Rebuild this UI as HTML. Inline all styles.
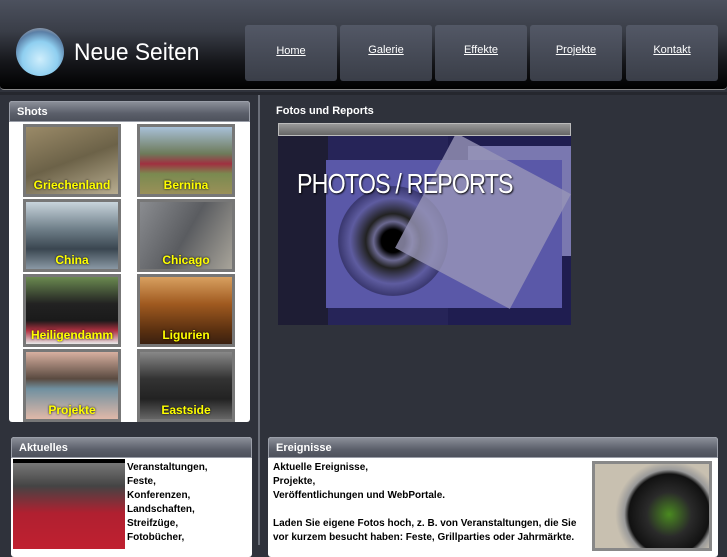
<!DOCTYPE html>
<html><head><meta charset="utf-8"><style>
*{margin:0;padding:0;box-sizing:border-box}
body{width:727px;height:545px;overflow:hidden;background:#2f323b;font-family:"Liberation Sans",sans-serif;position:relative}
.abs{position:absolute}
#hdr{left:0;top:0;width:727px;height:90px;background:linear-gradient(#4c515e 0%,#3a3e48 35%,#15161a 70%,#000 100%);border-bottom:1px solid #888;border-radius:0 0 4px 4px}
.btn{top:25px;width:92px;height:56px;background:linear-gradient(#535866,#3a3e48);border-radius:3px;color:#fff;font-size:11px;text-decoration:underline;text-align:center;line-height:52px}
.ph{height:21px;background:linear-gradient(#8a8e98,#5b5f6a 60%,#4d515c);border-radius:3px 3px 0 0;color:#fff;font-weight:bold;font-size:11px;padding-left:7px;line-height:20px;border:1px solid #9a9ea8}
.th{width:98px;height:73px;border:3px solid #777;}
.th span{position:absolute;left:0;right:0;bottom:2px;text-align:center;color:#ff0;font-weight:bold;font-size:12px;text-shadow:0 0 2px #000}
.txt{font-size:10px;font-weight:bold;color:#000;line-height:14px}
</style></head><body>
<div id="hdr" class="abs"></div>
<div class="abs" style="left:16px;top:28px;width:48px;height:48px;border-radius:50%;background:radial-gradient(circle at 50% 65%,#cfeefc 0%,#8fcff0 45%,#5b7fa6 70%,#8a96a8 80%,#3c4050 100%);"></div>
<div class="abs" style="left:74px;top:39px;color:#fff;font-size:24px;transform:scaleX(0.95);transform-origin:left">Neue Seiten</div>
<div class="abs btn" style="left:245px">Home</div>
<div class="abs btn" style="left:340px;line-height:50px">Galerie</div>
<div class="abs btn" style="left:435px;line-height:50px">Effekte</div>
<div class="abs btn" style="left:530px;line-height:50px">Projekte</div>
<div class="abs btn" style="left:626px;line-height:50px">Kontakt</div>
<div class="abs" style="left:258px;top:95px;width:2px;height:450px;background:#6a6e78"></div>
<div class="abs" style="left:0;top:92px;width:727px;height:3px;background:#25272e"></div>

<div class="abs" style="left:9px;top:101px;width:241px;height:321px;background:#fff;border-radius:3px"></div>
<div class="abs ph" style="left:9px;top:101px;width:241px">Shots</div>
<div class="abs th" style="left:23px;top:124px;background:linear-gradient(160deg,#9a8a68,#6c6248 50%,#b8ad90)"><span>Griechenland</span></div>
<div class="abs th" style="left:137px;top:124px;background:linear-gradient(#a8c0d8,#6d7a5a 40%,#a03040 55%,#7a8a50 70%,#9a9058)"><span>Bernina</span></div>
<div class="abs th" style="left:23px;top:199px;background:linear-gradient(#c8d4dc,#70808a 40%,#3a4650 70%,#8a98a4)"><span>China</span></div>
<div class="abs th" style="left:137px;top:199px;background:linear-gradient(120deg,#8a8c90,#5a5c60 50%,#a8a49a)"><span>Chicago</span></div>
<div class="abs th" style="left:23px;top:274px;background:linear-gradient(#6a8a50,#222 40%,#1a1a1a 65%,#b03040 80%,#e8e8e8)"><span>Heiligendamm</span></div>
<div class="abs th" style="left:137px;top:274px;background:linear-gradient(#d8a060,#a05a20 40%,#5a3010 80%,#3a2010)"><span>Ligurien</span></div>
<div class="abs th" style="left:23px;top:349px;background:linear-gradient(#d8b0a0,#5a4a40 40%,#7090a0 55%,#e0b8a8)"><span>Projekte</span></div>
<div class="abs th" style="left:137px;top:349px;background:linear-gradient(#888,#333 40%,#222 70%,#666)"><span>Eastside</span></div>

<div class="abs" style="left:276px;top:105px;color:#fff;font-weight:bold;font-size:11px">Fotos und Reports</div>
<div class="abs" style="left:278px;top:123px;width:293px;height:13px;background:linear-gradient(#999,#666);border:1px solid #bbb"></div>
<div class="abs" style="left:278px;top:136px;width:293px;height:189px;background:linear-gradient(90deg,#1e1d34 0,#1e1d34 50px,#262458 50px,#262458 170px,#1f1d50 170px);overflow:hidden">
 <div class="abs" style="left:190px;top:10px;width:103px;height:110px;background:#7a78b0"></div>
 <div class="abs" style="left:48px;top:24px;width:236px;height:148px;background:#5a58a8"></div>
 <div class="abs" style="left:60px;top:50px;width:110px;height:110px;border-radius:50%;background:radial-gradient(#000 15%,#6a6890 25%,#222 35%,#5e5ca0 55%,#3a3870 70%,#5a58a8 72%)"></div>
 <div class="abs" style="left:140px;top:20px;width:130px;height:130px;background:#9896b8;transform:rotate(28deg);opacity:.8"></div>
 <div class="abs" style="left:19px;top:32px;color:#fff;font-size:28px;letter-spacing:-1px;transform:scaleX(0.83);transform-origin:left;text-shadow:1px 1px 2px #000">PHOTOS / REPORTS</div>
</div>

<div class="abs" style="left:11px;top:437px;width:241px;height:120px;background:#fff;border-radius:3px"></div>
<div class="abs ph" style="left:11px;top:437px;width:241px">Aktuelles</div>
<div class="abs" style="left:13px;top:459px;width:112px;height:90px;background:linear-gradient(#000 0,#000 4px,#777 4px,#444 30%,#b02030 60%,#c02030)"></div>
<div class="abs txt" style="left:127px;top:461px">Veranstaltungen,<br>Feste,<br>Konferenzen,<br>Landschaften,<br>Streifzüge,<br>Fotobücher,</div>

<div class="abs" style="left:268px;top:437px;width:450px;height:120px;background:#fff;border-radius:3px"></div>
<div class="abs ph" style="left:268px;top:437px;width:450px">Ereignisse</div>
<div class="abs txt" style="left:273px;top:461px">Aktuelle Ereignisse,<br>Projekte,<br>Veröffentlichungen und WebPortale.<br><br>Laden Sie eigene Fotos hoch, z. B. von Veranstaltungen, die Sie<br>vor kurzem besucht haben: Feste, Grillparties oder Jahrmärkte.</div>
<div class="abs" style="left:592px;top:461px;width:120px;height:90px;border:3px solid #888;background:radial-gradient(circle at 65% 60%,#4a8a20 0,#2a2a2a 25%,#111 45%,#999 50%,#c8c0b0 60%)"></div>
</body></html>
